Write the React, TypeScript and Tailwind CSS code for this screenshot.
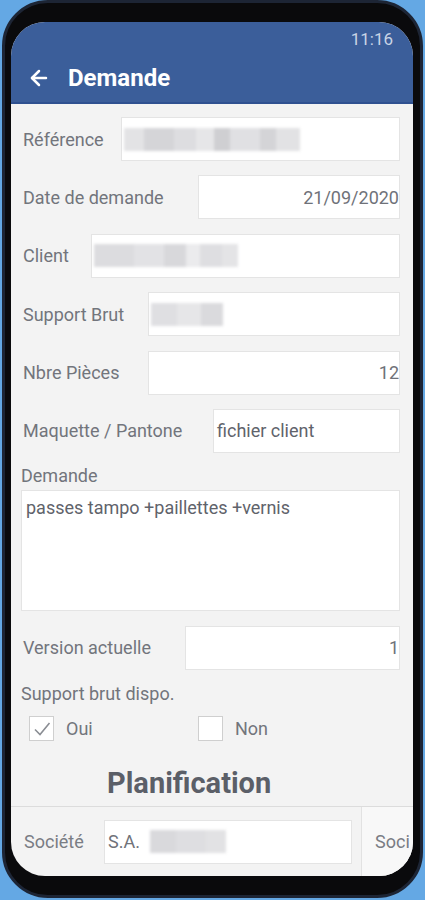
import { ArrowLeft } from 'lucide-react';

function Blur({ widths }: { widths: { w: number; c: string }[] }) {
  return (
    <div className="flex h-[23px] blur-[1.5px]">
      {widths.map((b, i) => (
        <div key={i} className="h-full" style={{ width: b.w, background: b.c }} />
      ))}
    </div>
  );
}

function Row({ label, inputLeft, children, align = 'left' }: { label: string; inputLeft: number; children?: React.ReactNode; align?: 'left' | 'right' }) {
  return (
    <div className="flex items-center h-[44px] mb-[14.4px]">
      <div className="shrink-0 text-[18px] text-[#72757c]" style={{ width: inputLeft }}>{label}</div>
      <div className={`flex-1 h-full bg-white border border-[#e4e4e4] flex items-center text-[18px] text-[#6f7279] ${align === 'right' ? 'justify-end pr-0' : 'px-[2px]'}`}>
        {children}
      </div>
    </div>
  );
}

function Check({ checked }: { checked?: boolean }) {
  return (
    <div className="w-[25px] h-[25px] bg-white border border-[#cfcfcf] flex items-center justify-center">
      {checked && (
        <svg width="20" height="20" viewBox="0 0 20 20" fill="none" stroke="#8a8d93" strokeWidth="1.6">
          <path d="M3 10.5 L8 15.5 L17.5 4" />
        </svg>
      )}
    </div>
  );
}

export default function App() {
  return (
    <div className="w-[425px] h-[900px] bg-[#64a8e4] overflow-hidden" style={{ fontFamily: 'Roboto, "Noto Sans", sans-serif' }}>
      <div className="ml-[2px] w-[421px] h-[898px] rounded-[46px] bg-[#0a0a0c] border-[3px] border-[#1d2535] pl-[6px] pr-[7px] pt-[19px] pb-[19px]">
        <div className="w-[402px] h-[854px] rounded-[34px] overflow-hidden bg-[#f3f3f3] flex flex-col">
          <div className="bg-[#3b5e9a] h-[82px] shrink-0 border-b-2 border-[#2f5190]">
            <div className="h-[33px] flex items-center justify-end pr-[20px] pt-[2px] text-[17px] text-[#c9d4e6]">11:16</div>
            <div className="h-[46px] flex items-center pl-[16px]">
              <ArrowLeft size={24} color="white" strokeWidth={2.5} />
              <span className="ml-[17px] text-[24px] font-bold text-white">Demande</span>
            </div>
          </div>
          <div className="pl-[12px] pr-[13px] pt-[13px] flex-1">
            <Row label="Référence" inputLeft={98}>
              <Blur widths={[{ w: 20, c: '#e3e3e5' }, { w: 30, c: '#d5d5d8' }, { w: 22, c: '#dddde0' }, { w: 18, c: '#e6e6e8' }, { w: 16, c: '#cfcfd2' }, { w: 30, c: '#e0e0e3' }, { w: 16, c: '#d4d4d7' }, { w: 24, c: '#e2e2e4' }]} />
            </Row>
            <Row label="Date de demande" inputLeft={175} align="right">21/09/2020</Row>
            <Row label="Client" inputLeft={68}>
              <Blur widths={[{ w: 40, c: '#dcdcdf' }, { w: 30, c: '#e2e2e5' }, { w: 22, c: '#d8d8db' }, { w: 14, c: '#ebebed' }, { w: 22, c: '#dedee1' }, { w: 16, c: '#e4e4e6' }]} />
            </Row>
            <Row label="Support Brut" inputLeft={125}>
              <Blur widths={[{ w: 26, c: '#dfdfe2' }, { w: 24, c: '#e6e6e8' }, { w: 22, c: '#dadadd' }]} />
            </Row>
            <Row label="Nbre Pièces" inputLeft={125} align="right">12</Row>
            <div className="flex items-center h-[44px] mb-[9px]">
              <div className="shrink-0 text-[18px] text-[#72757c] w-[190px]">Maquette / Pantone</div>
              <div className="flex-1 h-full bg-white border border-[#e4e4e4] flex items-center px-[3px] text-[18px] text-[#5f636b]">fichier client</div>
            </div>
            <div className="-ml-[2px] text-[18px] text-[#72757c] leading-[28px]">Demande</div>
            <div className="-ml-[2px] h-[121px] bg-white border border-[#e4e4e4] px-[4px] pt-[3px] text-[18px] text-[#5f636b]">passes tampo +paillettes +vernis</div>
            <div className="mt-[15px]">
              <Row label="Version actuelle" inputLeft={162} align="right">1</Row>
            </div>
            <div className="-ml-[2px] -mt-[1px] text-[18px] text-[#72757c] leading-[22px]">Support brut dispo.</div>
            <div className="flex items-center mt-[10px] pl-[6px]">
              <Check checked />
              <span className="ml-[12px] text-[18px] text-[#72757c] w-[132px]">Oui</span>
              <Check />
              <span className="ml-[12px] text-[18px] text-[#72757c]">Non</span>
            </div>
            <div className="mt-[24px] pl-[84px] text-[29px] font-bold text-[#5b5f68] leading-[34px]">Planification</div>
          </div>
          <div className="h-[70px] shrink-0 border-t border-[#dcdcdc] flex">
            <div className="w-[351px] shrink-0 flex items-center pl-[13px] pr-[9px] border-r border-[#e2e2e2]">
              <span className="w-[80px] text-[18px] text-[#7a7d84]">Société</span>
              <div className="flex-1 h-[44px] bg-white border border-[#e4e4e4] flex items-center px-[3px] text-[18px] text-[#6f7279]">
                <span>S.A.</span>
                <div className="ml-[10px]">
                  <Blur widths={[{ w: 26, c: '#d9d9dc' }, { w: 30, c: '#dedee1' }, { w: 20, c: '#e2e2e4' }]} />
                </div>
              </div>
            </div>
            <div className="flex-1 bg-[#f8f8f8] flex items-center pl-[13px] text-[18px] text-[#7a7d84] overflow-hidden whitespace-nowrap">Soci</div>
          </div>
        </div>
      </div>
    </div>
  );
}
